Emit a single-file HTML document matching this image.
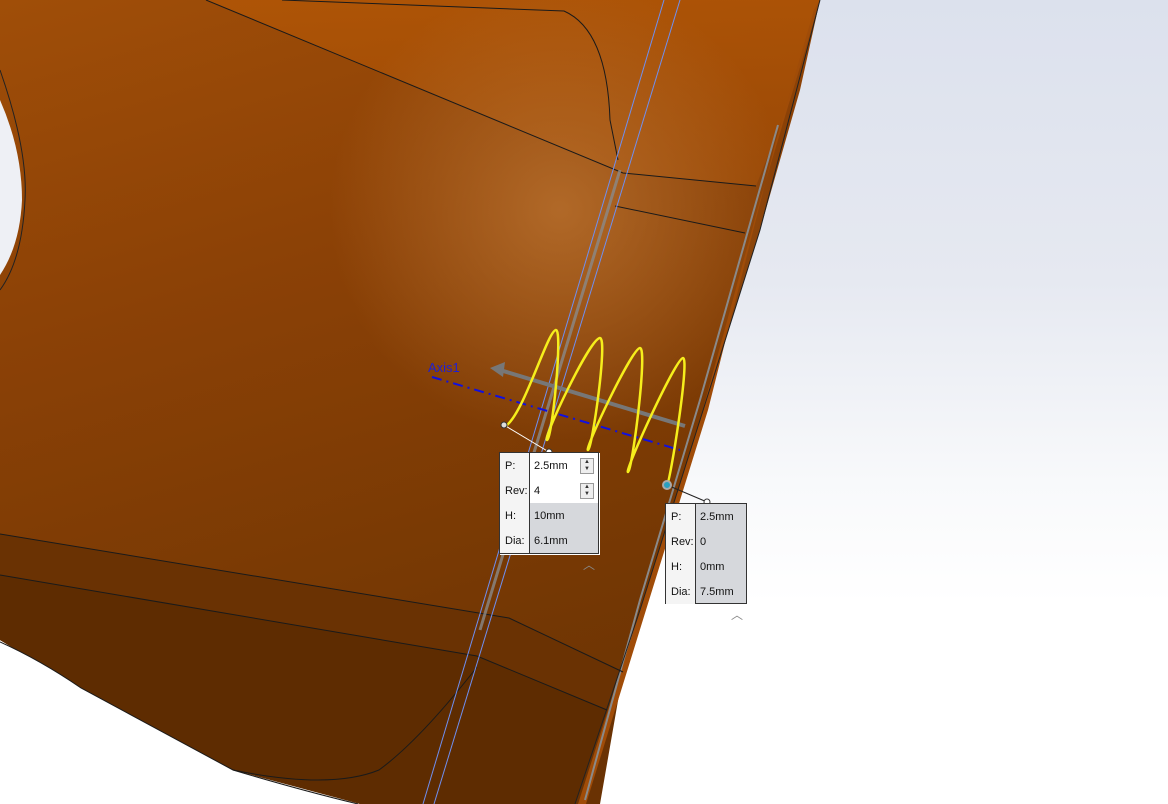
<!DOCTYPE html>
<html><head><style>
html,body{margin:0;padding:0;}
body{width:1168px;height:804px;overflow:hidden;position:relative;background:linear-gradient(#dce1ed 0%,#e6e9f1 35%,#f8f9fb 60%,#fff 75%);font-family:"Liberation Sans","DejaVu Sans",sans-serif;}
svg{position:absolute;left:0;top:0;}
.box{position:absolute;border:1px solid #333;background:#d6d8dc;font-size:11px;color:#111;box-shadow:1px 1px 0 #fff;}
.row{height:25px;display:flex;align-items:center;}
.l{width:30px;padding-left:5px;box-sizing:border-box;background:#f4f4f4;height:100%;display:flex;align-items:center;border-right:1px solid #333;}
.v{padding-left:4px;flex:1;height:100%;display:flex;align-items:center;position:relative;}
.w{background:#fff;}
.sp{position:absolute;right:4px;top:5px;width:12px;height:14px;border:1px solid #999;background:#eee;font-size:6px;line-height:7px;text-align:center;color:#333;}
.car{position:absolute;font-size:12px;color:#888;}
</style></head><body>
<svg width="1168" height="804" viewBox="0 0 1168 804">
<defs>
<linearGradient id="g1" x1="0" y1="0" x2="0.3" y2="1">
<stop offset="0" stop-color="#a04e08"/><stop offset="0.4" stop-color="#8b4106"/><stop offset="1" stop-color="#6e3503"/>
</linearGradient>
<linearGradient id="gt" x1="0" y1="0" x2="0" y2="1">
<stop offset="0" stop-color="#b65806"/><stop offset="1" stop-color="#a04c06"/>
</linearGradient>
<radialGradient id="hl" cx="560" cy="210" r="230" gradientUnits="userSpaceOnUse">
<stop offset="0" stop-color="#b8702e" stop-opacity="0.85"/><stop offset="1" stop-color="#b8702e" stop-opacity="0"/>
</radialGradient>
</defs>
<polygon points="0,0 820,0 800,90 760,230 700,420 640,610 575,804 360,804 230,740 80,688 0,640" fill="url(#g1)"/>
<polygon points="206,0 820,0 790,100 756,186 623,173" fill="url(#gt)" opacity="0.7"/>
<polygon points="0,0 820,0 800,90 760,230 700,420 640,610 575,804 0,804" fill="url(#hl)"/>
<polygon points="0,534 509,618 623,672 600,804 575,804 360,804 230,740 80,688 0,640" fill="#6a3203"/>
<polygon points="0,575 477,656 607,710 575,804 360,804 233,770 80,688 0,640" fill="#5e2c01"/>
<path d="M0,642 Q40,660 81,688 L233,770 Q300,790 358,804 L0,804 Z" fill="#fff"/>
<path d="M0,100 Q22,150 22,200 Q20,245 0,275 Z" fill="#eef0f5"/>
<path d="M0,70 Q28,150 25,200 Q22,260 0,290" fill="none" stroke="#222" stroke-width="1"/>
<polygon points="820,0 790,100 760,200 700,420 640,610 578,804 586,804 646,610 708,410 776,140 814,10" fill="#a04c08"/>
<path d="M778,125 L700,400 L640,600 L585,800" stroke="#8a8a8a" stroke-width="2" fill="none"/>
<path d="M820,0 L760,230 L700,420 L640,610 L575,804" stroke="#222" fill="none"/>
<g stroke="#1a1a1a" fill="none" stroke-width="1">
<path d="M206,0 L623,173 L756,186"/>
<path d="M282,0 L564,11 Q607,30 610,120 L618,160"/>
<path d="M615,206 L745,233"/>
<path d="M0,534 L509,618 L623,672"/>
<path d="M0,575 L477,656 L607,710"/>
<path d="M477,667 Q420,740 379,770 Q330,790 233,770"/>
<path d="M0,642 Q40,660 81,688 L233,770 Q300,790 358,804"/>
</g>
<path d="M664,0 L423,804" stroke="#6f8ff0" stroke-width="1" fill="none"/>
<path d="M680,0 L434,804" stroke="#6f8ff0" stroke-width="1" fill="none"/>
<path d="M620,170 L480,630" stroke="#8a8a8a" stroke-width="3" fill="none" opacity="0.8"/>
<text x="428" y="372" font-size="13" fill="#2020d0" font-family="Liberation Sans,sans-serif">Axis1</text>
<path d="M432,377 L680,450" stroke="#1010e0" stroke-width="2" stroke-dasharray="10,5,2,5" fill="none"/>
<path d="M500,370 L685,426" stroke="#777" stroke-width="4" fill="none"/>
<polygon points="490,368 505,362 503,377" fill="#777"/>
<path d="M507,425 C525,410 548,330 556,330 C563,330 552,440 547,440 C542,440 590,338 600,338 C608,338 592,450 588,450 C584,450 632,348 640,348 C648,348 632,472 628,472 C624,472 676,358 683,358 C690,358 670,483 667,485" stroke="#f6ee1c" stroke-width="2.5" fill="none"/>
<line x1="504" y1="425" x2="549" y2="452" stroke="#fff" stroke-width="1"/>
<circle cx="504" cy="425" r="3" fill="#ddd" stroke="#333"/>
<circle cx="549" cy="452" r="3" fill="#fff" stroke="#333"/>
<line x1="667" y1="485" x2="707" y2="502" stroke="#222" stroke-width="1"/>
<circle cx="667" cy="485" r="4" fill="#2aa0c0" stroke="#aaa" stroke-width="2"/>
<circle cx="707" cy="502" r="3" fill="#fff" stroke="#333"/>
</svg>
<div class="box" style="left:499px;top:452px;width:98px;height:100px;">
<div class="row"><div class="l">P:</div><div class="v w">2.5mm<div class="sp">▲<br>▼</div></div></div>
<div class="row"><div class="l">Rev:</div><div class="v w">4<div class="sp">▲<br>▼</div></div></div>
<div class="row"><div class="l">H:</div><div class="v">10mm</div></div>
<div class="row"><div class="l">Dia:</div><div class="v">6.1mm</div></div>
</div>
<div class="car" style="left:583px;top:556px;">︿</div>
<div class="box" style="left:665px;top:503px;width:80px;height:99px;">
<div class="row"><div class="l">P:</div><div class="v">2.5mm</div></div>
<div class="row"><div class="l">Rev:</div><div class="v">0</div></div>
<div class="row"><div class="l">H:</div><div class="v">0mm</div></div>
<div class="row"><div class="l">Dia:</div><div class="v">7.5mm</div></div>
</div>
<div class="car" style="left:731px;top:606px;">︿</div>
</body></html>
